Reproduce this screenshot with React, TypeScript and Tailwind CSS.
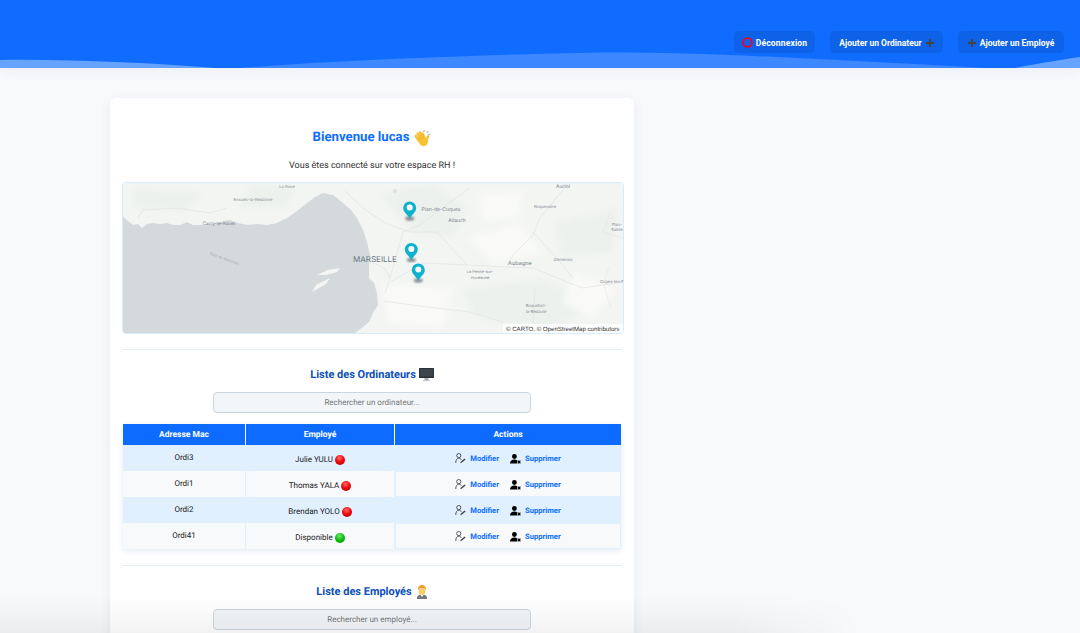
import React from "react";

const rows = [
  { mac: "Ordi3", emp: "Julie YULU", on: false },
  { mac: "Ordi1", emp: "Thomas YALA", on: false },
  { mac: "Ordi2", emp: "Brendan YOLO", on: false },
  { mac: "Ordi41", emp: "Disponible", on: true },
];

function Dot({ on }: { on: boolean }) {
  const id = on ? "gd" : "rd";
  return (
    <svg width="10" height="10" viewBox="0 0 10 10" className="shrink-0">
      <defs>
        <radialGradient id={id} cx="0.45" cy="0.3" r="0.75">
          <stop offset="0" stopColor={on ? "#6fe86f" : "#ff6a6a"} />
          <stop offset="0.55" stopColor={on ? "#10c010" : "#ee0a0a"} />
          <stop offset="1" stopColor={on ? "#089408" : "#b80000"} />
        </radialGradient>
      </defs>
      <circle cx="5" cy="5" r="5" fill={`url(#${id})`} />
    </svg>
  );
}

function EditUser() {
  return (
    <svg width="11" height="11" viewBox="0 0 11 11" fill="none" stroke="#333" strokeWidth="0.8" className="shrink-0">
      <circle cx="3.8" cy="2.6" r="2.1" />
      <path d="M0.8 10 C0.6 7 2 5.2 3.8 5.2 C5 5.2 5.9 5.8 6.4 6.8" />
      <path d="M5 10.2 L6 8.4 L9.6 5.6 L10.6 6.6 L7 9.6 Z" fill="#444" stroke="none" />
    </svg>
  );
}

function DelUser() {
  return (
    <svg width="11" height="10" viewBox="0 0 11 10" className="shrink-0">
      <circle cx="4.4" cy="2.5" r="2.4" fill="#000" />
      <path d="M0 9.5 C0 6.6 2 5.4 4.4 5.4 C5.6 5.4 6.5 5.7 7.2 6.2 V9.5 Z" fill="#000" />
      <path d="M7.8 6.6 L10.4 9.4 M10.4 6.6 L7.8 9.4" stroke="#000" strokeWidth="1.2" />
    </svg>
  );
}

function Pin({ x, y }: { x: number; y: number }) {
  return (
    <g transform={`translate(${x} ${y})`}>
      <ellipse cx="0" cy="0" rx="4.5" ry="2.2" fill="#39434c" opacity="0.55" filter="url(#b1)" />
      <path d="M0 0 C-1.6 -3.6 -6.5 -6.4 -6.5 -10.6 A6.5 6.5 0 1 1 6.5 -10.6 C6.5 -6.4 1.6 -3.6 0 0 Z" fill="#0fb1cf" />
      <circle cx="0" cy="-11" r="3" fill="#fff" />
    </g>
  );
}

function MapLabel({ x, y, t, s = 4.6, c = "#7d8791" }: { x: number; y: number; t: string; s?: number; c?: string }) {
  return (
    <text x={x} y={y} fontSize={s} fill={c} textAnchor="middle" fontFamily="Inter, sans-serif">
      {t}
    </text>
  );
}

const coast =
  "M0 33.7 L5 38 L10 42 L15 41 L19 45 L24 41 L30 40 L37 41 L44 40 L50 42 L57 42 L64 39 L70 42 L77 42 L88 41 L97 39 L107 37 L115 40 L124 42 L134 41 L144 42 L154 40 L164 35 L174 28 L184 20 L192 14 L200 10 L210 12 L220 20 L228 27 L234 35 L240 47 L244 59 L247 72 L246 84 L246 95 L251 100 L254 110 L255 122 L250 130 L246 139 L240 144 L232 150 L0 150 Z";

function MapView() {
  return (
    <svg viewBox="0 0 500 150" width="500" height="150" className="block">
      <defs>
        <filter id="b4"><feGaussianBlur stdDeviation="3" /></filter>
        <filter id="b1"><feGaussianBlur stdDeviation="1" /></filter>
        <filter id="b05"><feGaussianBlur stdDeviation="0.3" /></filter>
      </defs>
      <rect width="500" height="150" fill="#f3f5f3" />
      <g fill="#edf1ed" filter="url(#b4)">
        <path d="M255 10 L310 0 L345 25 L330 55 L290 50 Z" />
        <path d="M340 105 L420 95 L470 120 L430 148 L350 135 Z" />
        <path d="M10 5 L80 8 L65 28 L10 26 Z" />
        <path d="M130 0 L175 5 L160 26 L115 24 Z" />
        <path d="M430 40 L495 25 L490 70 L440 75 Z" />
      </g>
      <g fill="#f9faf8" filter="url(#b4)">
        <path d="M345 55 L395 40 L420 70 L370 80 Z" />
        <path d="M355 12 L400 8 L395 35 L360 38 Z" />
        <path d="M450 90 L495 105 L470 135 L440 120 Z" />
        <path d="M260 100 L330 105 L320 145 L265 140 Z" />
      </g>
      <path d={coast} fill="#d4dadc" filter="url(#b05)" />
      <path d="M194 92 L205 87 L217 85 L214 89 L203 92 Z M189 109 L193 102 L207 95 L203 101 Z" fill="#f5f6f4" />
      <g fill="none" stroke="#dfe3e3" strokeWidth="0.7" filter="url(#b05)">
        <path d="M15 35 L20 27 L54 25 L87 30 L104 25" />
        <path d="M347 5 L330 17 L297 42 L280 49 L267 95" />
        <path d="M287 49 L314 49 L344 82 L384 84 L410 85 L444 99 L460 105 L480 102 L500 99" />
        <path d="M444 2 L417 35 L410 52 L390 72 L384 82" />
        <path d="M410 49 L437 79 L450 95" />
        <path d="M267 99 L300 80 L344 82" />
        <path d="M260 118 L304 124 L347 129 L380 139" />
        <path d="M412 105 L410 139" />
        <path d="M222 8 L240 25 L262 40 L287 49" />
        <path d="M248 78 L262 86 L267 95 L262 110" />
      </g>
      <path d="M487 32 L480 49 L500 55 M486 85 L480 100 L488 125" fill="none" stroke="#edcfcb" strokeWidth="0.5" strokeDasharray="1.5 1" />
      <circle cx="272" cy="8" r="2" fill="#dce0e0" />
      <MapLabel x={164} y={5} t="La Rove" s={4.2} />
      <MapLabel x={130} y={18} t="Ensuès-la-Redonne" s={4.2} />
      <MapLabel x={96} y={41.5} t="Carry-le-Rouet" s={4.6} />
      <text x="0" y="0" fontSize="3.8" fill="#a5afb6" textAnchor="middle" fontFamily="Inter, sans-serif" transform="translate(101 77) rotate(20)">Baie de Marseille</text>
      <MapLabel x={252} y={78.5} t="MARSEILLE" s={8} c="#6c7883" />
      <MapLabel x={318} y={28} t="Plan-de-Cuques" s={5} />
      <MapLabel x={334} y={39} t="Allauch" s={5} />
      <MapLabel x={440} y={5} t="Auriol" s={5} />
      <MapLabel x={422} y={24.5} t="Roquevaire" s={4.2} />
      <MapLabel x={397} y={82} t="Aubagne" s={5.6} c="#6f7a84" />
      <MapLabel x={440} y={77.5} t="Gémenos" s={4.2} />
      <MapLabel x={357} y={89.5} t="La Penne-sur-" s={3.9} />
      <MapLabel x={357} y={95.5} t="Huveaune" s={3.9} />
      <MapLabel x={413} y={123.5} t="Roquefort-" s={4} />
      <MapLabel x={413} y={129.5} t="la-Bédoule" s={4} />
      <MapLabel x={494} y={43} t="Plan-" s={4} />
      <MapLabel x={494} y={48} t="Sainte" s={4} />
      <MapLabel x={489} y={99.5} t="Cuges-les-P" s={4} />
      <Pin x={286.7} y={35.5} />
      <Pin x={288.3} y={77} />
      <Pin x={295.3} y={97.5} />
      <rect x="380" y="141" width="120" height="9" fill="#ffffff" opacity="0.85" />
      <text x="383" y="148" fontSize="6.1" fill="#333" fontFamily="'Liberation Sans', sans-serif">© CARTO, © OpenStreetMap contributors</text>
    </svg>
  );
}

function Wave() {
  return (
    <svg width="17" height="17" viewBox="0 0 17 17" className="shrink-0">
      <path d="M9 1.5 L11 0.5 M12.5 2.5 L14.5 1.5 M14 5 L16 4" stroke="#aab3c0" strokeWidth="1.1" />
      <g stroke="#f9c235" strokeWidth="2.4" strokeLinecap="round">
        <path d="M5 11 L1.8 6" />
        <path d="M6.5 9 L3.6 3.6" />
        <path d="M8.5 8 L6 2.4" />
        <path d="M10.5 8 L8.6 3.4" />
        <path d="M12.6 11 L14 6.4" />
      </g>
      <path d="M4 9 L11 7 L14 10 C14.5 14 11.5 16.8 8.5 16 C5.8 15.4 4.5 12.6 4 9 Z" fill="#f9c235" />
      <path d="M6 5.5 L7.6 9 M8.2 4.6 L9.8 8.4 M4 7 L5.6 10" stroke="#e09f26" strokeWidth="0.6" />
    </svg>
  );
}

function Monitor() {
  return (
    <svg width="15" height="14" viewBox="0 0 15 14" className="shrink-0">
      <rect x="0" y="0" width="15" height="10" rx="0.6" fill="#2b3138" />
      <rect x="1" y="1" width="13" height="7.5" fill="#3c444d" />
      <rect x="5.5" y="10" width="4" height="2" fill="#a8aeb4" />
      <rect x="4" y="12" width="7" height="1.2" fill="#c4c8cc" />
    </svg>
  );
}

function Worker() {
  return (
    <svg width="12" height="14" viewBox="0 0 12 14" className="shrink-0">
      <path d="M0.8 14 C0.8 10.8 2.6 9.6 6 9.6 C9.4 9.6 11.2 10.8 11.2 14 Z" fill="#777a7c" />
      <path d="M4.2 9.6 L6 12 L7.8 9.6 Z" fill="#fff" />
      <path d="M2.6 4 H9.4 V7 C9.4 9 7.6 10 6 10 C4.4 10 2.6 9 2.6 7 Z" fill="#f6cf6b" />
      <path d="M2 5 C1.6 1.4 4 0 6 0 C8 0 10.4 1.4 10 5 L8.6 3.6 H3.4 Z" fill="#eda02a" />
    </svg>
  );
}

function Action({ icon, label }: { icon: React.ReactNode; label: string }) {
  return (
    <span className="flex items-center gap-[4px]">
      {icon}
      <span className="text-[7.6px] font-bold text-[#0d6efd]">{label}</span>
    </span>
  );
}

function Plus() {
  return (
    <span className="relative w-[8px] h-[8px]">
      <span className="absolute left-0 top-[3px] w-[8px] h-[2px] bg-[#444]" />
      <span className="absolute left-[3px] top-0 w-[2px] h-[8px] bg-[#444]" />
    </span>
  );
}

export default function App() {
  return (
    <div className="relative h-[633px] w-[1080px] overflow-hidden bg-[#f8f9fb] [text-rendering:geometricPrecision]" style={{ fontFamily: "Roboto, sans-serif" }}>
      <header className="relative z-10 h-[68px] bg-[#0f6cff] flex justify-end items-start gap-[15px] pt-[31px] pr-[16px] shadow-[0_3px_14px_rgba(40,60,100,0.05)]">
        <svg className="absolute left-0 top-0" width="1080" height="68" viewBox="0 0 1080 68">
          <path d="M0 60 C70 59 150 63 215 68 L0 68 Z" fill="#66a3ff" />
          <path d="M240 68 C340 60 470 55 600 52.5 C700 52 800 58 985 68 Z" fill="#3d87ff" />
          <path d="M1015 68 C1040 63 1060 60 1080 57 V68 Z" fill="#66a3ff" />
        </svg>
        <button className="relative flex items-center justify-center gap-[3px] pt-[2px] w-[81px] h-[22px] rounded-[5px] bg-[#0d62e8] text-white text-[8.5px] tracking-[0.02em] font-bold">
          <svg width="11" height="11" viewBox="0 0 11 11" className="shrink-0 -mt-[1px]">
            <circle cx="5.5" cy="5.5" r="4.4" fill="none" stroke="#f5002a" strokeWidth="1.8" />
          </svg>
          Déconnexion
        </button>
        <button className="relative flex items-center justify-center gap-[4px] pt-[2px] w-[113px] h-[22px] rounded-[5px] bg-[#0d62e8] text-white text-[8.5px] font-bold">
          Ajouter un Ordinateur
          <Plus />
        </button>
        <button className="relative flex items-center justify-center gap-[4px] pt-[2px] w-[106px] h-[22px] rounded-[5px] bg-[#0d62e8] text-white text-[8.5px] font-bold">
          <Plus />
          Ajouter un Employé
        </button>
      </header>

      <main className="ml-[110px] mt-[30px] w-[524px] rounded-[6px] bg-white px-[12px] pb-[40px] shadow-[0_2px_12px_rgba(30,60,120,0.08)]">
        <h1 className="pt-[31px] flex items-center justify-center gap-[5px] h-[49px] text-[13.2px] font-bold text-[#0d6efd]">
          Bienvenue lucas <Wave />
        </h1>
        <p className="mt-[12px] h-[15px] text-center text-[9px] leading-[15px] text-[#333]">Vous êtes connecté sur votre espace RH !</p>
        <div className="mt-[8px] w-[502px] rounded-[4px] border border-[#d6ebfb] overflow-hidden">
          <MapView />
        </div>
        <div className="mt-[15px] h-px bg-[#e3eef8]" />

        <h2 className="mt-[16px] flex items-center justify-center gap-[3px] h-[18px] text-[11px] font-bold text-[#0a4fb8]">
          Liste des Ordinateurs <Monitor />
        </h2>
        <div className="mx-auto mt-[8px] flex h-[21px] w-[318px] items-center justify-center rounded-[4px] border border-[#c9d5df] bg-[#f2f6f9] text-[8px] text-[#777]">
          Rechercher un ordinateur...
        </div>

        <div className="mt-[11px] ml-[1px] w-[498px] shadow-[0_2px_6px_rgba(30,90,160,0.12)]">
          <div className="grid h-[21px] grid-cols-[123px_149px_226px] bg-[#0d6cff] text-[8.5px] font-bold text-white">
            <div className="flex items-center justify-center pt-px border-r border-white">Adresse Mac</div>
            <div className="flex items-center justify-center pt-px border-r border-white">Employé</div>
            <div className="flex items-center justify-center pt-px">Actions</div>
          </div>
          {rows.map((r, i) => (
            <div key={r.mac} className={`grid h-[26px] grid-cols-[123px_149px_226px] text-[8px] text-[#222] ${i % 2 === 0 ? "bg-[#e0f0ff]" : "bg-[#f8f9fb]"}`}>
              <div className={`flex items-center justify-center pb-[1px] border-r ${i % 2 === 0 ? "border-transparent" : "border-[#e0f0ff]"}`}>{r.mac}</div>
              <div className={`flex items-center justify-center gap-[2px] pt-[3px] border-r ${i % 2 === 0 ? "border-transparent" : "border-[#e0f0ff]"}`}>
                {r.emp} <Dot on={r.on} />
              </div>
              <div className={`flex items-center justify-center gap-[11px] pt-[2px] ${i % 2 === 0 ? "" : "border border-[#e0f0ff]"}`}>
                <Action icon={<EditUser />} label="Modifier" />
                <Action icon={<DelUser />} label="Supprimer" />
              </div>
            </div>
          ))}
        </div>

        <div className="mt-[16px] h-px bg-[#e3eef8]" />
        <h2 className="mt-[17px] flex items-center justify-center gap-[4px] h-[18px] text-[11px] font-bold text-[#0a4fb8]">
          Liste des Employés <Worker />
        </h2>
        <div className="mx-auto mt-[8px] flex h-[21px] w-[318px] items-center justify-center rounded-[4px] border border-[#c9d5df] bg-[#f2f6f9] text-[8px] text-[#777]">
          Rechercher un employé...
        </div>
      </main>

      <div className="pointer-events-none absolute left-0 bottom-0 z-20 h-[36px] w-[860px] bg-gradient-to-b from-transparent to-black/[0.05] [mask-image:linear-gradient(to_right,black_85%,transparent)]" />
    </div>
  );
}
